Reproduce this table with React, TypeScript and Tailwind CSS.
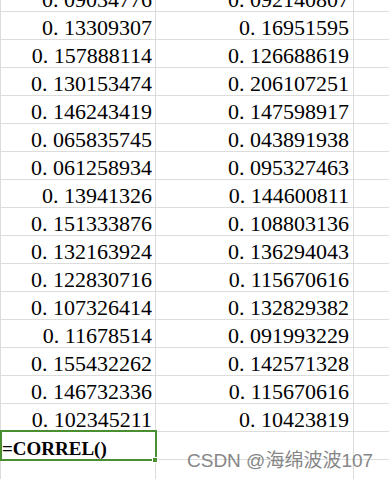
import React from "react";

const col1 = [
  "0.09034776", "0.13309307", "0.157888114", "0.130153474", "0.146243419",
  "0.065835745", "0.061258934", "0.13941326", "0.151333876", "0.132163924",
  "0.122830716", "0.107326414", "0.11678514", "0.155432262", "0.146732336",
  "0.102345211",
];
const col2 = [
  "0.092140807", "0.16951595", "0.126688619", "0.206107251", "0.147598917",
  "0.043891938", "0.095327463", "0.144600811", "0.108803136", "0.136294043",
  "0.115670616", "0.132829382", "0.091993229", "0.142571328", "0.115670616",
  "0.10423819",
];

function Num({ v }: { v: string }) {
  const [a, b] = v.split(".");
  return (
    <span className="whitespace-nowrap">
      {a}
      <span className="inline-block w-[11px]">.</span>
      {b}
    </span>
  );
}

const serif = { fontFamily: '"Liberation Serif", "Noto Sans CJK SC", serif' };

export default function App() {
  return (
    <div className="relative w-[389px] h-[479px] overflow-hidden bg-white">
      <div className="-mt-[16px] flex flex-col">
        {col1.map((v, i) => (
          <div key={i} className="flex h-[28px]">
            <div
              className="w-[156px] border-l border-r border-b border-[#dcdcdc] flex items-end justify-end pr-[3px] text-[22px] leading-[22px] text-black"
              style={serif}
            >
              <Num v={v} />
            </div>
            <div
              className="w-[198px] border-r border-b border-[#dcdcdc] flex items-end justify-end pr-[4px] text-[22px] leading-[22px] text-black"
              style={serif}
            >
              <Num v={col2[i]} />
            </div>
            <div className="flex-1 border-b border-[#dcdcdc]" />
          </div>
        ))}
        <div className="flex h-[28px]">
          <div
            className="relative w-[156px] border-l border-r border-b border-[#dcdcdc] flex items-end pl-[1px] pb-[1px] text-[19px] leading-[19px] font-bold text-black"
            style={serif}
          >
            =CORREL()
            <div className="absolute left-[-1px] top-[-2px] w-[157px] h-[31px] border-2 border-[#4a8f2f]">
              <div className="absolute right-[-3px] bottom-[-4px] w-[6px] h-[6px] bg-[#4a8f2f] border border-white" />
            </div>
          </div>
          <div className="w-[198px] border-r border-b border-[#dcdcdc]" />
          <div className="flex-1 border-b border-[#dcdcdc]" />
        </div>
        <div className="flex h-[28px]">
          <div className="w-[156px] border-l border-r border-[#dcdcdc]" />
          <div className="w-[198px] border-r border-[#dcdcdc]" />
          <div className="flex-1" />
        </div>
      </div>
      <div
        className="absolute left-[187px] top-[451px] text-[19px] leading-[19px] whitespace-nowrap text-[#7a7a7a] opacity-90"
        style={{ fontFamily: '"Liberation Sans", "Noto Sans CJK SC", sans-serif' }}
      >
        CSDN @海绵波波107
      </div>
    </div>
  );
}
